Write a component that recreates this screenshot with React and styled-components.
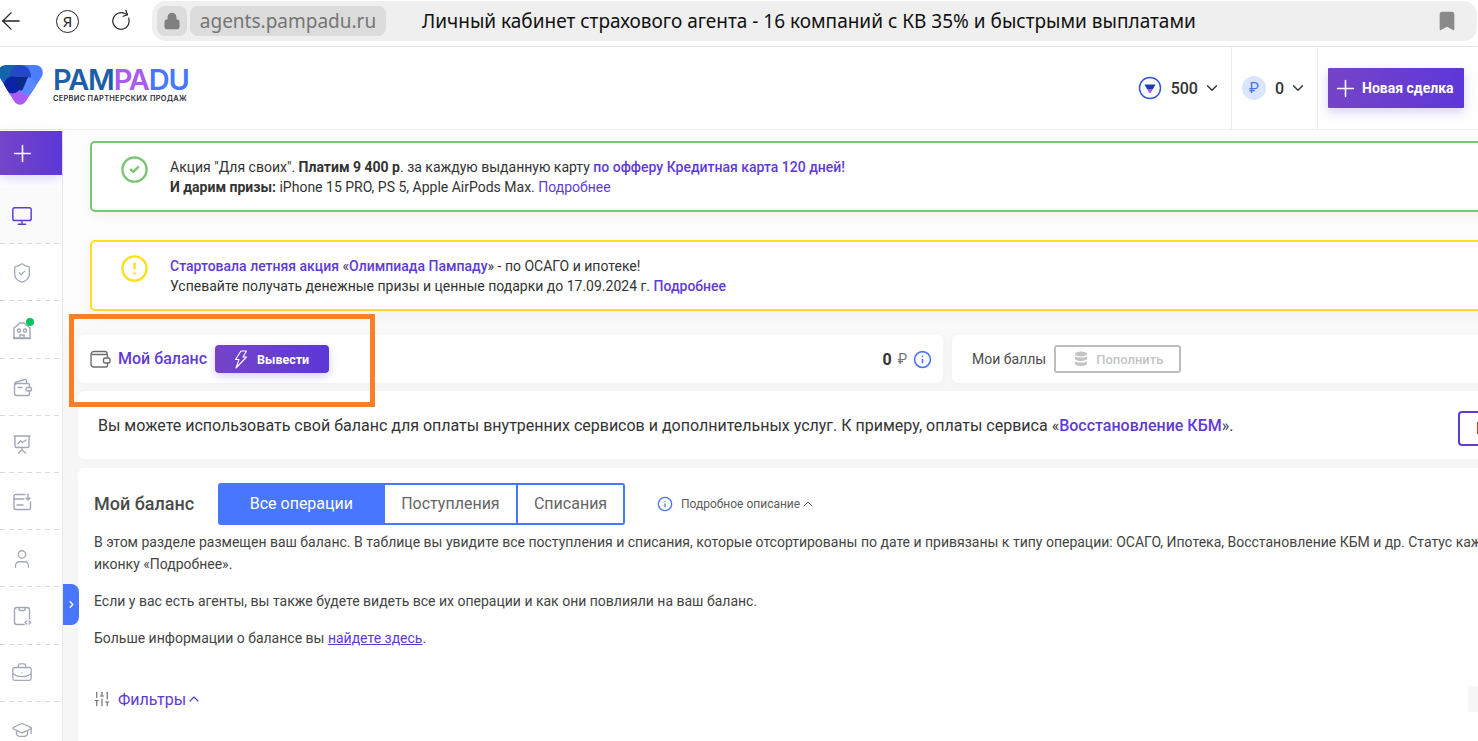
import React from 'react';
import styled, { createGlobalStyle } from 'styled-components';
import {
  ArrowLeft,
  RotateCw,
  Lock,
  Bookmark,
  ChevronDown,
  ChevronUp,
  ChevronRight,
  Plus,
  Monitor,
  ShieldCheck,
  User,
  BriefcaseBusiness,
  GraduationCap,
  CircleCheck,
  CircleAlert,
  Info,
  SlidersVertical,
} from 'lucide-react';

const purple = '#5f3bd6';
const blue = '#4876ff';
const gradient = 'linear-gradient(90deg, #7544c8 0%, #5d37d8 100%)';

const GlobalStyle = createGlobalStyle`
  html, body {
    margin: 0;
    height: 100%;
    overflow: hidden;
    background: #fff;
    font-family: Roboto, "Liberation Sans", sans-serif;
    color: #333;
  }
  * { box-sizing: border-box; }
`;

const Page = styled.div`
  position: relative;
  width: 1478px;
  height: 741px;
  overflow: hidden;
  display: flex;
  flex-direction: column;
`;

const BrowserBar = styled.div`
  height: 47px;
  flex: none;
  display: flex;
  align-items: flex-start;
  border-bottom: 1px solid #e6e6e6;
  padding-top: 1px;
`;

const NavIcons = styled.div`
  width: 152px;
  height: 40px;
  flex: none;
  display: flex;
  align-items: center;
  gap: 31px;
  color: #222;
  svg:first-child { margin-left: -3px; }
`;

const YaMark = styled.span`
  width: 23px;
  height: 23px;
  border: 1.5px solid #222;
  border-radius: 50%;
  display: flex;
  align-items: center;
  justify-content: center;
  font-size: 15px;
  font-family: "Noto Sans", sans-serif;
  line-height: 1;
`;

const Omnibox = styled.div`
  width: 1325px;
  height: 40px;
  background: #efefef;
  border-radius: 14px;
  display: flex;
  align-items: center;
  padding: 0 19px 0 5px;
`;

const LockBox = styled.div`
  width: 30px;
  height: 30px;
  background: #dcdcdc;
  border-radius: 8px;
  display: flex;
  align-items: center;
  justify-content: center;
  color: #808080;
  margin-right: 3px;
`;

const UrlBox = styled.div`
  width: 196px;
  height: 30px;
  background: #dcdcdc;
  border-radius: 8px;
  display: flex;
  align-items: center;
  justify-content: center;
  font: 19px "Noto Sans", sans-serif;
  color: #757575;
`;

const PageTitle = styled.div`
  flex: 1;
  margin-left: 36px;
  font: 19px "Noto Sans", sans-serif;
  color: #111;
  white-space: nowrap;
`;

const Header = styled.header`
  height: 83px;
  flex: none;
  display: flex;
  align-items: stretch;
  justify-content: space-between;
  border-bottom: 1px solid #ececec;
`;

const Logo = styled.div`
  display: flex;
  align-items: flex-start;
  gap: 10px;
  padding-top: 17px;
`;

const LogoText = styled.div`
  display: flex;
  flex-direction: column;
  gap: 2px;
  padding-top: 3px;
`;

const LogoName = styled.div`
  font: 600 29px/25px Inter, sans-serif;
  letter-spacing: -1.2px;
  color: #1c5fa8;
  span { color: #a85cf0; }
  b { color: #4876ff; font-weight: 600; }
`;

const LogoSub = styled.div`
  font: 600 7.4px/9px Inter, sans-serif;
  letter-spacing: 0.3px;
  color: #2d2d3a;
  white-space: nowrap;
`;

const HeaderRight = styled.div`
  display: flex;
  align-items: stretch;
`;

const HeaderCell = styled.div`
  display: flex;
  align-items: center;
  gap: 5px;
  padding: 0 10px;
  border-right: 1px solid #ececec;
  font-size: 16px;
  font-weight: 500;
  color: #333;
`;

const PointsWrap = styled.span`
  display: flex;
  margin-right: 4px;
`;

const RubleBadge = styled.span`
  width: 24px;
  height: 24px;
  border-radius: 50%;
  background: #dbe5ff;
  color: ${blue};
  display: flex;
  align-items: center;
  justify-content: center;
  font-size: 15px;
  font-weight: 400;
  margin-right: 4px;
`;

const NewDeal = styled.button`
  align-self: center;
  width: 136px;
  height: 40px;
  margin: 0 14px 0 10px;
  border: 0;
  border-radius: 1px;
  background: ${gradient};
  box-shadow: 0 4px 12px rgba(95, 59, 214, 0.25);
  color: #fff;
  font: 700 14px Roboto, sans-serif;
  display: flex;
  align-items: center;
  gap: 3px;
  padding: 0 0 0 4px;
  white-space: nowrap;
`;

const Body = styled.div`
  flex: 1;
  display: flex;
  min-height: 0;
`;

const Sidebar = styled.aside`
  width: 63px;
  flex: none;
  border-right: 1px solid #e8e8e8;
  background: #fff;
  padding-top: 1px;
`;

const SidePlus = styled.div`
  height: 44px;
  margin-bottom: 12px;
  padding-left: 9px;
  background: ${gradient};
  box-shadow: 0 4px 12px rgba(95, 59, 214, 0.2);
  color: #fff;
  display: flex;
  align-items: center;
`;

const SideItem = styled.div`
  height: 57.2px;
  display: flex;
  align-items: center;
  padding-left: 11px;
  position: relative;
  color: ${(p) => (p.$active ? purple : '#a3a8b8')};
  background-color: ${(p) => (p.$active ? '#fafafa' : 'transparent')};
  background-image: repeating-linear-gradient(90deg, #d5d9e4 0 5px, transparent 5px 9px);
  background-size: 100% 1px;
  background-position: bottom;
  background-repeat: no-repeat;
`;

const GreenDot = styled.span`
  position: absolute;
  top: 17px;
  left: 26px;
  width: 8px;
  height: 8px;
  border-radius: 50%;
  background: #0ac45a;
`;

const Handle = styled.div`
  position: absolute;
  left: 63px;
  top: 584px;
  width: 16px;
  height: 41px;
  background: ${blue};
  border-radius: 0 8px 8px 0;
  color: #fff;
  display: flex;
  align-items: center;
  justify-content: center;
  z-index: 2;
`;

const Main = styled.main`
  flex: 1;
  min-width: 0;
  overflow: hidden;
  background: linear-gradient(180deg, #fdfdfd 0, #fdfdfd 170px, #f7f7f7 215px);
  padding: 11px 0 0 15px;
`;

const Content = styled.div`
  width: 1520px;
  display: flex;
  flex-direction: column;
`;

const Alert = styled.div`
  height: 71px;
  margin: 0 0 28px 12px;
  background: #fff;
  border: 2px solid ${(p) => p.$color};
  border-radius: 5px;
  box-shadow: 0 4px 14px rgba(0, 0, 0, 0.05);
  display: flex;
  align-items: center;
  gap: 21px;
  padding: 0 0 0 28px;
  font-size: 14px;
  line-height: 20px;
  color: ${(p) => p.$color};
  svg { align-self: flex-start; margin-top: 12px; }
`;

const AlertText = styled.div`
  color: #333;
  white-space: nowrap;
  strong { font-weight: 700; }
`;

const Accent = styled.span`
  color: ${purple};
  font-weight: ${(p) => (p.$plain ? 400 : 500)};
`;

const BalanceRow = styled.div`
  display: flex;
  gap: 9px;
  margin: -4px 0 8px;
`;

const Card = styled.section`
  background: #fff;
  border-radius: 6px;
  box-shadow: 0 2px 10px rgba(0, 0, 0, 0.025);
`;

const BalanceCard = styled(Card)`
  width: 865px;
  height: 48px;
  display: flex;
  align-items: center;
  padding: 0 12px;
  color: #6e6e6e;
`;

const BalanceTitle = styled.span`
  margin: 0 0 2px 8px;
  font-size: 16px;
  font-weight: 500;
  color: ${purple};
`;

const Withdraw = styled.button`
  width: 114px;
  height: 28px;
  margin-left: 8px;
  border: 0;
  border-radius: 4px;
  background: ${gradient};
  box-shadow: 0 3px 8px rgba(95, 59, 214, 0.25);
  color: #fff;
  font: 700 12.5px Roboto, sans-serif;
  display: flex;
  align-items: center;
  gap: 9px;
  padding: 0 0 0 19px;
`;

const BalanceAmount = styled.div`
  margin-left: auto;
  display: flex;
  align-items: center;
  gap: 6px;
  font-size: 16px;
  font-weight: 700;
  color: #333;
  span { font-size: 14px; font-weight: 400; color: #777; }
  svg { margin-right: -1px; }
`;

const PointsCard = styled(Card)`
  flex: 1;
  height: 48px;
  display: flex;
  align-items: center;
  gap: 8px;
  padding-left: 20px;
  font-size: 14px;
  color: #4c4c4c;
`;

const TopUp = styled.button`
  width: 127px;
  height: 28px;
  border: 2px solid #bdbdbd;
  border-radius: 3px;
  background: #fff;
  color: #c4c4c4;
  font: 500 13px Roboto, sans-serif;
  display: flex;
  align-items: center;
  gap: 8px;
  padding: 0 0 0 18px;
`;

const NoteCard = styled(Card)`
  height: 68px;
  margin-bottom: 9px;
  display: flex;
  align-items: flex-start;
  justify-content: space-between;
  padding: 24px 20px 0 20px;
  font-size: 16px;
  line-height: 22px;
  color: #333;
  white-space: nowrap;
`;

const OutlineButton = styled.div`
  width: 120px;
  height: 35px;
  margin-top: -4px;
  border: 2px solid ${purple};
  border-radius: 4px;
  padding: 5px 0 0 16px;
  font-weight: 500;
`;

const OperationsCard = styled(Card)`
  min-height: 300px;
  padding: 15px 16px;
`;

const OperationsHead = styled.div`
  display: flex;
  align-items: center;
  margin-bottom: 6px;
`;

const OperationsTitle = styled.h2`
  width: 124px;
  margin: 0 0 2px;
  font-size: 18px;
  font-weight: 500;
  color: #4a4a4a;
`;

const Tabs = styled.div`
  display: flex;
  height: 42px;
  width: 407px;
  border: 2px solid ${blue};
  border-radius: 3px;
`;

const Tab = styled.div`
  flex: ${(p) => p.$grow};
  display: flex;
  align-items: center;
  justify-content: center;
  padding-bottom: 2px;
  font-size: 16px;
  color: ${(p) => (p.$active ? '#fff' : '#666')};
  background: ${(p) => (p.$active ? blue : '#fff')};
  & + & { border-left: 2px solid ${blue}; }
`;

const Details = styled.div`
  margin-left: 32px;
  padding-bottom: 1px;
  display: flex;
  align-items: center;
  font-size: 12px;
  color: #5c5c5c;
  svg:first-child { color: ${blue}; margin-right: 8px; }
`;

const Paragraph = styled.p`
  margin: 0 0 15px;
  font-size: 14px;
  line-height: 22px;
  color: #444;
  white-space: nowrap;
  a { color: ${purple}; }
`;

const FilterRow = styled.div`
  display: flex;
  align-items: center;
  justify-content: space-between;
  margin-top: 37px;
  font-size: 16px;
`;

const FilterLink = styled.div`
  display: flex;
  align-items: center;
  color: ${purple};
  svg:first-child { color: #707070; margin: 0 7px 0 -1px; }
`;

const FilterStub = styled.div`
  width: 60px;
  height: 26px;
  margin-right: 54px;
  background: #f6f6f6;
  border-radius: 3px;
`;

const Annotation = styled.div`
  position: absolute;
  left: 69px;
  top: 314px;
  width: 306px;
  height: 93px;
  border: 5px solid #ff7f27;
  z-index: 3;
`;

const LogoMark = () => (
  <svg width="44" height="42" viewBox="0 0 44 42" style={{ marginLeft: -1 }}>
    <defs>
      <clipPath id="logo-shape">
        <path d="M7 1H36C43 1 46 8 42 14L27 37C24 42 18 42 15 37L1 14C-3 8 0 1 7 1Z" />
      </clipPath>
    </defs>
    <g clipPath="url(#logo-shape)">
      <rect width="22" height="30" fill="#1663ad" />
      <rect x="22" width="22" height="30" fill="#4a7dff" />
      <rect y="24" width="44" height="18" fill="#ab5cf5" />
      <circle cx="21.500" cy="11.500" r="10.500" fill="#2348c4" />
      <circle cx="28" cy="22" r="9" fill="#5c88ff" />
      <circle cx="13.500" cy="21" r="8.500" fill="#0a22a8" />
      <path d="M14 13h15l-5 12c-1 2-3 2-4 0z" fill="#0b2a8c" />
    </g>
  </svg>
);

const PointsIcon = () => (
  <svg width="24" height="24" viewBox="0 0 24 24">
    <circle cx="12" cy="12" r="10.500" fill="#fff" stroke="#3557d8" strokeWidth="1.500" />
    <path d="M6.500 8.500h11l-2.500 4.500H9z" fill="#1b3fae" />
    <path d="M9 13h6l-2 3.500c-.5.7-1.500.7-2 0z" fill="#ab5cf5" />
  </svg>
);

const HouseIcon = () => (
  <svg width="22" height="22" viewBox="0 0 22 22" fill="none" stroke="currentColor" strokeWidth="1.400">
    <path d="M3 19V9l6-5h4l6 5v10z" />
    <path d="M2 19.500h18M9 19v-3h4v3" />
    <rect x="6.500" y="10" width="3" height="3" rx="1" />
    <rect x="12.500" y="10" width="3" height="3" rx="1" />
  </svg>
);

const ReceiptIcon = () => (
  <svg width="22" height="22" viewBox="0 0 22 22" fill="none" stroke="currentColor" strokeWidth="1.400" strokeLinecap="round">
    <path d="M14 3.500H5a2 2 0 0 0-2 2v11a2 2 0 0 0 2 2h13a1.500 1.500 0 0 0 1.500-1.500V11" />
    <path d="M3 8h10M6 14h6M17 3v6M15 7l2 2 2-2" />
  </svg>
);

const TabletIcon = () => (
  <svg width="22" height="22" viewBox="0 0 22 22" fill="none" stroke="currentColor" strokeWidth="1.400" strokeLinecap="round">
    <path d="M13 19.500H6A2.500 2.500 0 0 1 3.500 17V5A2.500 2.500 0 0 1 6 2.500h10A2.500 2.500 0 0 1 18.500 5v9" />
    <path d="M8 3v1.500a1 1 0 0 0 1 1h4a1 1 0 0 0 1-1V3" />
    <path d="M15.500 16l-1.500 1.500 1.500 1.500M18 16l1.500 1.500-1.500 1.500" />
  </svg>
);

const ChartBoardIcon = () => (
  <svg width="22" height="22" viewBox="0 0 22 22" fill="none" stroke="currentColor" strokeWidth="1.400" strokeLinecap="round">
    <path d="M3 3h16M4 3v10a1.500 1.500 0 0 0 1.500 1.500h11A1.500 1.500 0 0 0 18 13V3" />
    <path d="M7 10.500l2.500-2.500 2 1.500L15 7M11 14.500V17M7.500 20l3.500-3 3.500 3" />
  </svg>
);

const SideWalletIcon = () => (
  <svg width="22" height="22" viewBox="0 0 22 22" fill="none" stroke="currentColor" strokeWidth="1.400" strokeLinecap="round">
    <path d="M3.500 8.500A2.500 2.500 0 0 1 5.500 6l8-2.500A1.500 1.500 0 0 1 15.500 5v2" />
    <path d="M17 7.500H6A2.500 2.500 0 0 0 3.500 10v7A2.500 2.500 0 0 0 6 19.500h11a1.500 1.500 0 0 0 1.500-1.500v-9A1.500 1.500 0 0 0 17 7.500z" />
    <rect x="15" y="11.500" width="5.500" height="3.500" rx="1.500" fill="#fff" />
    <path d="M7 11.500h4" />
  </svg>
);

const BalanceWalletIcon = () => (
  <svg width="21" height="20" viewBox="0 0 21 20" fill="none" stroke="#6e6e6e" strokeWidth="1.400" style={{ marginRight: -1 }}>
    <path d="M17 6V4.500A2 2 0 0 0 15 2.500H4A3 3 0 0 0 1 5.500v10A2.500 2.500 0 0 0 3.500 18H16a1.500 1.500 0 0 0 1.500-1.500V14" />
    <path d="M1.500 5.500h15a1 1 0 0 1 1 1V9" />
    <rect x="13.500" y="9" width="6.500" height="5" rx="1.500" fill="#fff" />
  </svg>
);

const BoltIcon = () => (
  <svg width="14" height="19" viewBox="0 0 14 19" fill="none" stroke="#fff" strokeWidth="1.100" strokeLinejoin="round">
    <path d="M7 1h5.500L9 7h3.500L2 18l3-8.500H1.500z" />
  </svg>
);

const CoinsIcon = () => (
  <svg width="14" height="16" viewBox="0 0 14 16" fill="#c4c4c4">
    <ellipse cx="7" cy="3" rx="6" ry="2.500" />
    <path d="M1 5c1 2 11 2 12 0v2.500c0 1.500-2.500 2.500-6 2.500S1 9 1 7.500z" />
    <path d="M1 10c1 2 11 2 12 0v2.500c0 1.500-2.500 2.500-6 2.500s-6-1-6-2.500z" />
  </svg>
);

export default function App() {
  return (
    <Page>
      <GlobalStyle />
      <BrowserBar>
        <NavIcons>
          <ArrowLeft size={28} strokeWidth={1.1} />
          <YaMark>Я</YaMark>
          <RotateCw size={22} strokeWidth={1.3} style={{ transform: 'rotate(-20deg)' }} />
        </NavIcons>
        <Omnibox>
          <LockBox>
            <Lock size={18} fill="#808080" />
          </LockBox>
          <UrlBox>agents.pampadu.ru</UrlBox>
          <PageTitle>Личный кабинет страхового агента - 16 компаний с КВ 35% и быстрыми выплатами</PageTitle>
          <Bookmark size={22} fill="#8a8a8a" color="#8a8a8a" />
        </Omnibox>
      </BrowserBar>

      <Header>
        <Logo>
          <LogoMark />
          <LogoText>
            <LogoName>
              PAM<span>PA</span>
              <b>DU</b>
            </LogoName>
            <LogoSub>СЕРВИС ПАРТНЕРСКИХ ПРОДАЖ</LogoSub>
          </LogoText>
        </Logo>
        <HeaderRight>
          <HeaderCell>
            <PointsWrap>
              <PointsIcon />
            </PointsWrap>
            500
            <ChevronDown size={18} strokeWidth={1.8} />
          </HeaderCell>
          <HeaderCell>
            <RubleBadge>₽</RubleBadge>
            0
            <ChevronDown size={18} strokeWidth={1.8} />
          </HeaderCell>
          <NewDeal>
            <Plus size={27} strokeWidth={1.4} />
            Новая сделка
          </NewDeal>
        </HeaderRight>
      </Header>

      <Body>
        <Sidebar>
          <SidePlus>
            <Plus size={27} strokeWidth={1.4} />
          </SidePlus>
          <SideItem $active>
            <Monitor size={22} strokeWidth={1.6} />
          </SideItem>
          <SideItem>
            <ShieldCheck size={22} strokeWidth={1.4} />
          </SideItem>
          <SideItem>
            <HouseIcon />
            <GreenDot />
          </SideItem>
          <SideItem>
            <SideWalletIcon />
          </SideItem>
          <SideItem>
            <ChartBoardIcon />
          </SideItem>
          <SideItem>
            <ReceiptIcon />
          </SideItem>
          <SideItem>
            <User size={22} strokeWidth={1.4} />
          </SideItem>
          <SideItem>
            <TabletIcon />
          </SideItem>
          <SideItem>
            <BriefcaseBusiness size={22} strokeWidth={1.4} />
          </SideItem>
          <SideItem>
            <GraduationCap size={22} strokeWidth={1.4} />
          </SideItem>
        </Sidebar>

        <Main>
          <Content>
            <Alert $color="#7cc576">
              <CircleCheck size={29} strokeWidth={2} />
              <AlertText>
                Акция "Для своих". <strong>Платим 9 400 р</strong>. за каждую выданную карту{' '}
                <Accent>по офферу Кредитная карта 120 дней!</Accent>
                <br />
                <strong>И дарим призы:</strong> iPhone 15 PRO, PS 5, Apple AirPods Max.{' '}
                <Accent $plain>Подробнее</Accent>
              </AlertText>
            </Alert>
            <Alert $color="#ffdd1f">
              <CircleAlert size={29} strokeWidth={2} />
              <AlertText>
                <Accent>Стартовала летняя акция</Accent> «<Accent>Олимпиада Пампаду</Accent>» - по ОСАГО и ипотеке!
                <br />
                Успевайте получать денежные призы и ценные подарки до 17.09.2024 г. <Accent>Подробнее</Accent>
              </AlertText>
            </Alert>

            <BalanceRow>
              <BalanceCard>
                <BalanceWalletIcon />
                <BalanceTitle>Мой баланс</BalanceTitle>
                <Withdraw>
                  <BoltIcon />
                  Вывести
                </Withdraw>
                <BalanceAmount>
                  0 <span>₽</span>
                  <Info size={19} color={blue} strokeWidth={2} />
                </BalanceAmount>
              </BalanceCard>
              <PointsCard>
                Мои баллы
                <TopUp>
                  <CoinsIcon />
                  Пополнить
                </TopUp>
              </PointsCard>
            </BalanceRow>

            <NoteCard>
              <span>
                Вы можете использовать свой баланс для оплаты внутренних сервисов и дополнительных услуг. К примеру,
                оплаты сервиса «<Accent>Восстановление КБМ</Accent>».
              </span>
              <OutlineButton>Перейти</OutlineButton>
            </NoteCard>

            <OperationsCard>
              <OperationsHead>
                <OperationsTitle>Мой баланс</OperationsTitle>
                <Tabs>
                  <Tab $active $grow={166}>
                    Все операции
                  </Tab>
                  <Tab $grow={134}>Поступления</Tab>
                  <Tab $grow={107}>Списания</Tab>
                </Tabs>
                <Details>
                  <Info size={16} strokeWidth={2} />
                  Подробное описание
                  <ChevronUp size={16} strokeWidth={1.4} />
                </Details>
              </OperationsHead>
              <Paragraph>
                В этом разделе размещен ваш баланс. В таблице вы увидите все поступления и списания, которые отсортированы
                по дате и привязаны к типу операции: ОСАГО, Ипотека, Восстановление КБМ и др. Статус каждой операции
                <br />
                иконку «Подробнее».
              </Paragraph>
              <Paragraph>Если у вас есть агенты, вы также будете видеть все их операции и как они повлияли на ваш баланс.</Paragraph>
              <Paragraph>
                Больше информации о балансе вы <a href="#here">найдете здесь</a>.
              </Paragraph>
              <FilterRow>
                <FilterLink>
                  <SlidersVertical size={18} strokeWidth={1.6} />
                  Фильтры
                  <ChevronUp size={16} strokeWidth={1.8} />
                </FilterLink>
                <FilterStub />
              </FilterRow>
            </OperationsCard>
          </Content>
        </Main>
      </Body>

      <Handle>
        <ChevronRight size={11} strokeWidth={3} />
      </Handle>
      <Annotation />
    </Page>
  );
}
